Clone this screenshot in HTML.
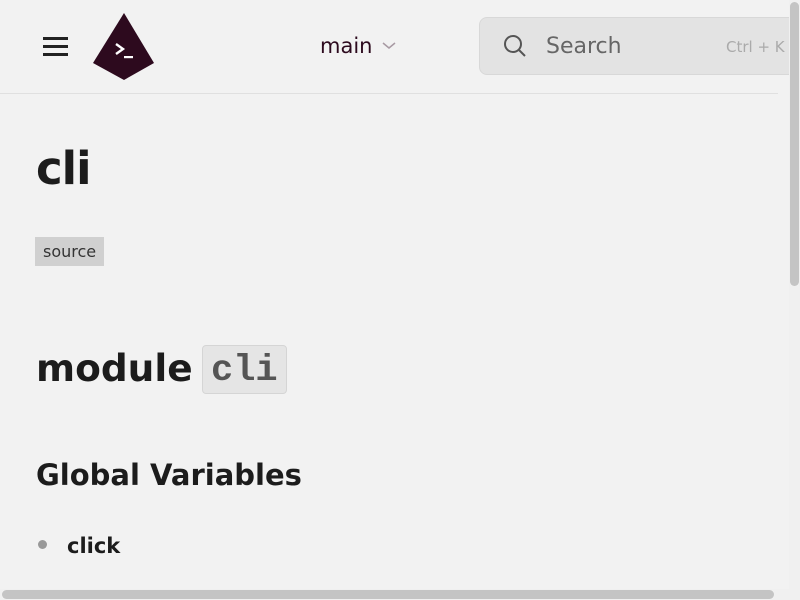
<!DOCTYPE html>
<html><head><style>
body{margin:0;width:800px;height:600px;overflow:hidden;background:#f2f2f2;font-family:"DejaVu Sans","Liberation Sans",sans-serif;color:#1c1c1c;position:relative}
.a{position:absolute;white-space:nowrap}
</style></head><body>
<div class="a" style="left:43px;top:37px;width:25px;height:3px;background:#222;box-shadow:0 8px 0 #222,0 16px 0 #222"></div>
<svg class="a" style="left:0;top:0" width="200" height="90"><polygon points="124,13 154,63 124,80 93,63" fill="#2d0a1e"/><path d="M116,44 l7,5 -7,5" stroke="#fff" stroke-width="2.4" fill="none"/><rect x="124" y="56" width="9" height="2.2" fill="#fff"/></svg>
<div class="a" style="left:320px;top:34px;font-size:21px;color:#2d0a1e">main</div>
<svg class="a" style="left:382px;top:41px" width="14" height="10"><path d="M1,2 l6,5 6,-5" stroke="#a89aa3" stroke-width="1.5" fill="none"/></svg>
<div class="a" style="left:479px;top:17px;width:330px;height:56px;background:#e3e3e3;border:1px solid #d8d8d8;border-radius:8px"></div>
<svg class="a" style="left:502px;top:33px" width="26" height="26"><circle cx="11" cy="11" r="8" stroke="#555" stroke-width="2" fill="none"/><path d="M17,17 l6,6" stroke="#555" stroke-width="2"/></svg>
<div class="a" style="left:546px;top:34px;font-size:22px;color:#666">Search</div>
<div class="a" style="left:726px;top:38px;font-size:15px;color:#aaa">Ctrl + K</div>
<div class="a" style="left:0;top:93px;width:778px;height:1px;background:#e0e0e0"></div>
<div class="a" style="left:36px;top:142px;font-size:45px;font-weight:bold;letter-spacing:-1px">cli</div>
<div class="a" style="left:35px;top:237px;width:69px;height:29px;background:#d0d0d0"></div>
<div class="a" style="left:43px;top:242px;font-size:16px;color:#333">source</div>
<div class="a" style="left:36px;top:346px;font-size:37.5px;font-weight:bold">module</div>
<div class="a" style="left:202px;top:345px;width:83px;height:47px;background:#e5e5e5;border:1px solid #d5d5d5;border-radius:4px"></div>
<div class="a" style="left:211px;top:350px;font-family:'Liberation Mono',monospace;font-size:37px;font-weight:bold;color:#555">cli</div>
<div class="a" style="left:36px;top:458px;font-size:29px;font-weight:bold">Global Variables</div>
<div class="a" style="left:38px;top:540px;width:9px;height:9px;border-radius:50%;background:#999"></div>
<div class="a" style="left:67px;top:534px;font-size:21px;font-weight:bold">click</div>
<div class="a" style="left:789px;top:0;width:11px;height:600px;background:#f0f0f0"></div>
<div class="a" style="left:790px;top:2px;width:9px;height:284px;background:#c4c4c4;border-radius:5px"></div>
<div class="a" style="left:0;top:589px;width:789px;height:11px;background:#f0f0f0"></div>
<div class="a" style="left:2px;top:590px;width:772px;height:9px;background:#c4c4c4;border-radius:5px"></div>
</body></html>
